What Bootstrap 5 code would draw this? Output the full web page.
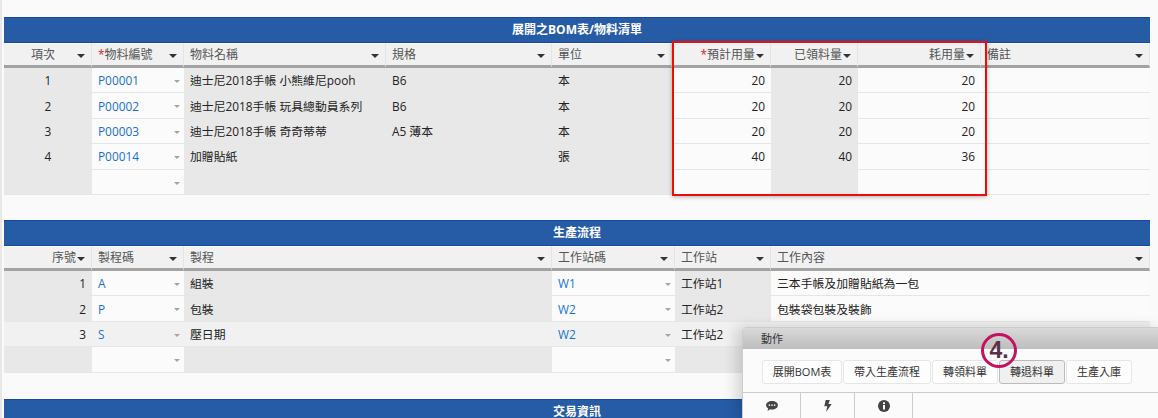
<!doctype html>
<html lang="zh-Hant"><head><meta charset="utf-8"><title>BOM</title>
<link href="https://cdn.jsdelivr.net/npm/bootstrap@5.3.0/dist/css/bootstrap.min.css" rel="stylesheet">
<style>
html,body{height:100%;overflow:hidden}
body{background:#fafafa;font-family:"Open Sans","Noto Sans CJK TC",sans-serif;font-size:12px;color:#222;position:relative;padding:17px 8px 0 4px;box-shadow:inset 2px 0 #e8e8e8}
.title-bar{height:26px;background:#265ca6;border:1px solid #1747a6;border-width:1px 0;color:#fff;font-weight:700;font-size:12px;line-height:24px;text-align:center}
table.grid{table-layout:fixed;width:1146px;margin:0;border-collapse:separate;border-spacing:0;--bs-table-bg:transparent;background:transparent;color:#222}
table.grid th,table.grid td{padding:2px 6px 0;height:25.4px;font-weight:400;font-size:11.85px;vertical-align:middle;border:0;border-bottom:1px solid #e6e6e6;white-space:nowrap;box-shadow:none;position:relative}
table.grid thead th{height:25px;background:#f1f1f1;color:#555;font-size:12px;border-bottom:3px solid #a3a3a3;border-right:1px solid #e4e4e4;border-top:1px solid #fafafa;padding:1px 15px 0 6px}
table.grid thead th.c{text-align:center}
table.grid thead th.r{text-align:right}
.caret-d{position:absolute;right:6px;top:10px;width:0;height:0;border:4px solid transparent;border-top:4px solid #333;border-bottom:0}
.caret-s{position:absolute;right:4px;top:12px;width:0;height:0;border:3px solid transparent;border-top:3px solid #a5a5a5;border-bottom:0}
.star{color:#e02020}
td.ro{background:#e8e8e8}
td.ed{background:#fbfbfb}
td.lnk{color:#1571d0}
tr.alt td{background:#f1f1f1}
.sec2{margin-top:25px}
.sec3{margin-top:26px}
.red-box{position:absolute;left:672px;top:41px;width:315px;height:155px;border:2px solid #f00c0c;box-shadow:0 1px 4px rgba(0,0,0,.3);pointer-events:none}
.act-panel{position:absolute;left:742px;top:327px;width:420px;height:95px;background:#fbfbfb;border:1px solid #ccc;border-radius:4px 0 0 0;box-shadow:-6px 0 14px rgba(0,0,0,.15)}
.act-head{height:21px;background:linear-gradient(#d9d9d9,#bdbdbd);color:#333;font-size:11px;line-height:21px;padding-left:18px}
.act-btns{padding:11px 0 0 19px;height:44px;border-bottom:1px solid #ccc;box-sizing:border-box}
.act-btn{height:24px;padding:0;font-size:11px;line-height:22px;color:#333;background:#fdfdfd;border:1px solid #e6e6e6;border-radius:3px;text-align:center;margin-right:1px}
.act-btn.sel{background:#f0f0f0;border-color:#bbb}
.act-tabs>div{height:26px;border-right:1px solid #ccc;display:flex;justify-content:center;align-items:center}
.num-ring{position:absolute;left:981px;top:333px;width:36px;height:35px;border:3px solid #c4125f;border-radius:50%;color:#5a3048;font-weight:700;font-size:23px;line-height:29px;text-align:center;font-family:"Liberation Sans",sans-serif}
</style></head><body>
<div class="title-bar">展開之BOM表/物料清單</div>
<table class="table grid"><colgroup><col style="width:88px"><col style="width:92px"><col style="width:202px"><col style="width:166px"><col style="width:120px"><col style="width:99px"><col style="width:87px"><col style="width:123px"><col></colgroup>
<thead><tr><th class="c">項次<i class="caret-d"></i></th><th><span class="star">*</span>物料編號<i class="caret-d"></i></th><th>物料名稱<i class="caret-d"></i></th><th>規格<i class="caret-d"></i></th><th>單位<i class="caret-d"></i></th><th class="r"><span class="star">*</span>預計用量<i class="caret-d"></i></th><th class="r">已領料量<i class="caret-d"></i></th><th class="r">耗用量<i class="caret-d"></i></th><th>備註<i class="caret-d"></i></th></tr></thead>
<tbody>
<tr><td class="ro text-center">1</td><td class="ed lnk">P00001<i class="caret-s"></i></td><td class="ro">迪士尼2018手帳 小熊維尼pooh</td><td class="ro">B6</td><td class="ro">本</td><td class="ed text-end">20</td><td class="ro text-end">20</td><td class="ed text-end">20</td><td class="ed"></td></tr>
<tr><td class="ro text-center">2</td><td class="ed lnk">P00002<i class="caret-s"></i></td><td class="ro">迪士尼2018手帳 玩具總動員系列</td><td class="ro">B6</td><td class="ro">本</td><td class="ed text-end">20</td><td class="ro text-end">20</td><td class="ed text-end">20</td><td class="ed"></td></tr>
<tr><td class="ro text-center">3</td><td class="ed lnk">P00003<i class="caret-s"></i></td><td class="ro">迪士尼2018手帳 奇奇蒂蒂</td><td class="ro">A5 薄本</td><td class="ro">本</td><td class="ed text-end">20</td><td class="ro text-end">20</td><td class="ed text-end">20</td><td class="ed"></td></tr>
<tr><td class="ro text-center">4</td><td class="ed lnk">P00014<i class="caret-s"></i></td><td class="ro">加贈貼紙</td><td class="ro"></td><td class="ro">張</td><td class="ed text-end">40</td><td class="ro text-end">40</td><td class="ed text-end">36</td><td class="ed"></td></tr>
<tr><td class="ro"></td><td class="ed"><i class="caret-s"></i></td><td class="ro"></td><td class="ro"></td><td class="ro"></td><td class="ed"></td><td class="ro"></td><td class="ed"></td><td class="ed"></td></tr>
</tbody></table>
<div class="title-bar sec2">生產流程</div>
<table class="table grid"><colgroup><col style="width:88px"><col style="width:92px"><col style="width:368px"><col style="width:123px"><col style="width:96px"><col></colgroup>
<thead><tr><th class="r">序號<i class="caret-d"></i></th><th>製程碼<i class="caret-d"></i></th><th>製程<i class="caret-d"></i></th><th>工作站碼<i class="caret-d"></i></th><th>工作站<i class="caret-d"></i></th><th>工作內容<i class="caret-d"></i></th></tr></thead>
<tbody>
<tr><td class="ro text-end">1</td><td class="ed lnk">A<i class="caret-s"></i></td><td class="ro">組裝</td><td class="ed lnk">W1<i class="caret-s"></i></td><td class="ro">工作站1</td><td class="ed">三本手帳及加贈貼紙為一包</td></tr>
<tr><td class="ro text-end">2</td><td class="ed lnk">P<i class="caret-s"></i></td><td class="ro">包裝</td><td class="ed lnk">W2<i class="caret-s"></i></td><td class="ro">工作站2</td><td class="ed">包裝袋包裝及裝飾</td></tr>
<tr class="alt"><td class="text-end">3</td><td class="lnk">S<i class="caret-s"></i></td><td>壓日期</td><td class="lnk">W2<i class="caret-s"></i></td><td>工作站2</td><td></td></tr>
<tr><td class="ro"></td><td class="ed"><i class="caret-s"></i></td><td class="ro"></td><td class="ed"><i class="caret-s"></i></td><td class="ro"></td><td class="ed"></td></tr>
</tbody></table>
<div class="title-bar sec3">交易資訊</div>
<div class="red-box"></div>
<div class="act-panel">
<div class="act-head">動作</div>
<div class="act-btns d-flex align-items-start">
<button class="btn act-btn" style="width:80px">展開BOM表</button><button class="btn act-btn" style="width:88px">帶入生產流程</button><button class="btn act-btn" style="width:66px">轉領料單</button><button class="btn act-btn sel" style="width:66px">轉退料單</button><button class="btn act-btn" style="width:66px">生產入庫</button>
</div>
<div class="act-tabs d-flex">
<div style="width:58px"><svg width="12" height="10" viewBox="0 0 13 11"><path fill="#444" d="M6.5 0C2.9 0 0 2 0 4.600c0 1.400.9 2.700 2.300 3.600L1.500 11l3-1.900c.6.1 1.300.2 2 .2 3.600 0 6.500-2.100 6.500-4.700S10.100 0 6.500 0z"/><circle cx="3.600" cy="4.600" r=".9" fill="#fbfbfb"/><circle cx="6.500" cy="4.600" r=".9" fill="#fbfbfb"/><circle cx="9.400" cy="4.600" r=".9" fill="#fbfbfb"/></svg></div>
<div style="width:54px"><svg width="8" height="12" viewBox="0 0 8 13"><path fill="#444" d="M1.500 0H6L4.500 4.300H8L2 13 3.200 6.800H0z"/></svg></div>
<div style="width:58px"><svg width="12" height="12" viewBox="0 0 12 12"><circle cx="6" cy="6" r="6" fill="#444"/><rect x="5" y="5" width="2" height="4.500" fill="#fbfbfb"/><rect x="5" y="2.300" width="2" height="1.800" fill="#fbfbfb"/></svg></div>
</div>
</div>
<div class="num-ring">4.</div>
</body></html>
